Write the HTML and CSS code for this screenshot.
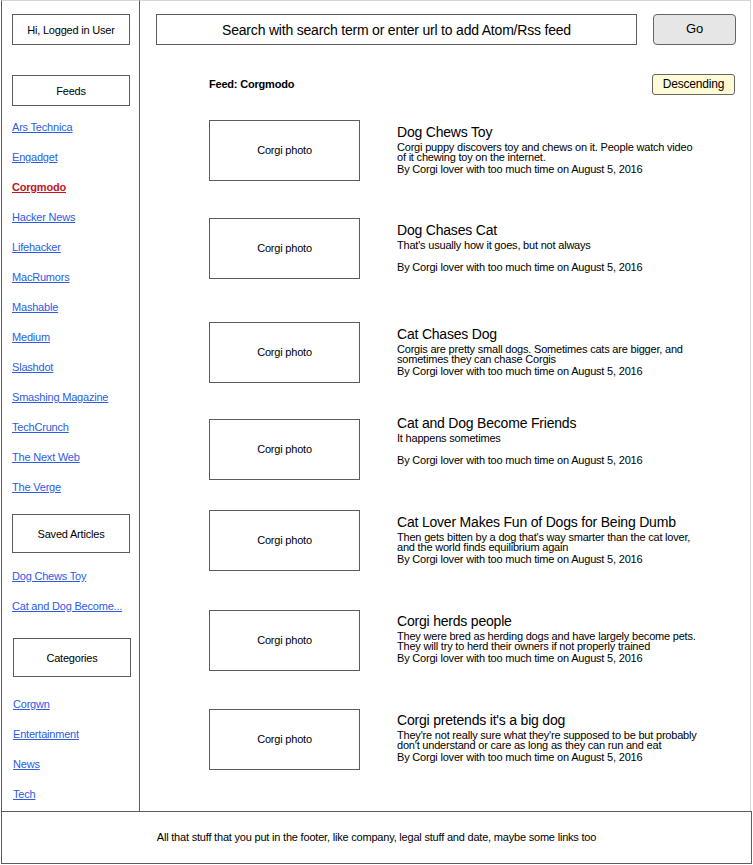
FILE: index.html
```html
<!DOCTYPE html>
<html lang="en">
<head>
<meta charset="utf-8">
<title>Feed Reader</title>
<link rel="stylesheet" href="styles.css">
</head>
<body>
<div class="page">
  <div class="top">
    <aside class="sidebar">
      <div class="box box-user">Hi, Logged in User</div>
      <div class="box box-feeds">Feeds</div>
      <nav class="links links-feeds">
        <a href="#">Ars Technica</a>
        <a href="#">Engadget</a>
        <a href="#" class="active">Corgmodo</a>
        <a href="#">Hacker News</a>
        <a href="#">Lifehacker</a>
        <a href="#">MacRumors</a>
        <a href="#">Mashable</a>
        <a href="#">Medium</a>
        <a href="#">Slashdot</a>
        <a href="#">Smashing Magazine</a>
        <a href="#">TechCrunch</a>
        <a href="#">The Next Web</a>
        <a href="#">The Verge</a>
      </nav>
      <div class="box box-saved">Saved Articles</div>
      <nav class="links links-saved">
        <a href="#">Dog Chews Toy</a>
        <a href="#">Cat and Dog Become...</a>
      </nav>
      <div class="box box-cats">Categories</div>
      <nav class="links links-cats">
        <a href="#">Corgwn</a>
        <a href="#">Entertainment</a>
        <a href="#">News</a>
        <a href="#">Tech</a>
      </nav>
    </aside>
    <main class="main">
      <div class="search-row">
        <div class="search">Search with search term or enter url to add Atom/Rss feed</div>
        <button class="go">Go</button>
      </div>
      <div class="feed-row">
        <span class="feed-name">Feed: Corgmodo</span>
        <button class="sort">Descending</button>
      </div>
      <div class="articles">
        <article class="article">
          <div class="photo">Corgi photo</div>
          <div class="text">
            <h2 class="title">Dog Chews Toy</h2>
            <p class="desc">Corgi puppy discovers toy and chews on it. People watch video<br>of it chewing toy on the internet.</p>
            <p class="by">By Corgi lover with too much time on August 5, 2016</p>
          </div>
        </article>
        <article class="article">
          <div class="photo">Corgi photo</div>
          <div class="text">
            <h2 class="title">Dog Chases Cat</h2>
            <p class="desc">That's usually how it goes, but not always</p>
            <p class="by">By Corgi lover with too much time on August 5, 2016</p>
          </div>
        </article>
        <article class="article">
          <div class="photo">Corgi photo</div>
          <div class="text">
            <h2 class="title">Cat Chases Dog</h2>
            <p class="desc">Corgis are pretty small dogs. Sometimes cats are bigger, and<br>sometimes they can chase Corgis</p>
            <p class="by">By Corgi lover with too much time on August 5, 2016</p>
          </div>
        </article>
        <article class="article">
          <div class="photo">Corgi photo</div>
          <div class="text">
            <h2 class="title">Cat and Dog Become Friends</h2>
            <p class="desc">It happens sometimes</p>
            <p class="by">By Corgi lover with too much time on August 5, 2016</p>
          </div>
        </article>
        <article class="article">
          <div class="photo">Corgi photo</div>
          <div class="text">
            <h2 class="title">Cat Lover Makes Fun of Dogs for Being Dumb</h2>
            <p class="desc">Then gets bitten by a dog that's way smarter than the cat lover,<br>and the world finds equilibrium again</p>
            <p class="by">By Corgi lover with too much time on August 5, 2016</p>
          </div>
        </article>
        <article class="article">
          <div class="photo">Corgi photo</div>
          <div class="text">
            <h2 class="title">Corgi herds people</h2>
            <p class="desc">They were bred as herding dogs and have largely become pets.<br>They will try to herd their owners if not properly trained</p>
            <p class="by">By Corgi lover with too much time on August 5, 2016</p>
          </div>
        </article>
        <article class="article">
          <div class="photo">Corgi photo</div>
          <div class="text">
            <h2 class="title">Corgi pretends it's a big dog</h2>
            <p class="desc">They're not really sure what they're supposed to be but probably<br>don't understand or care as long as they can run and eat</p>
            <p class="by">By Corgi lover with too much time on August 5, 2016</p>
          </div>
        </article>
      </div>
    </main>
  </div>
  <footer class="footer">All that stuff that you put in the footer, like company, legal stuff and date, maybe some links too</footer>
</div>
</body>
</html>
```

FILE: styles.css
```css
* { box-sizing: border-box; }

body {
  margin: 0;
  background: #fff;
  color: #000;
  font-family: "Liberation Sans", Arial, Helvetica, sans-serif;
  font-size: 11px;
  letter-spacing: -0.2px;
}

.page {
  width: 753px;
  padding-left: 1px;
}

.top {
  display: flex;
  height: 811px;
}

/* Sidebar */
.sidebar {
  width: 139px;
  flex: none;
  border-left: 1px solid #5c5c5c;
  border-right: 1px solid #5c5c5c;
  border-top: 1px solid #d6d6d6;
  padding: 13px 0 0 10px;
  display: flex;
  flex-direction: column;
  align-items: flex-start;
}

.box {
  width: 118px;
  border: 1px solid #5c5c5c;
  display: flex;
  align-items: center;
  justify-content: center;
  font-size: 11px;
  flex: none;
}

.box-user { height: 31px; }
.box-feeds { height: 31px; margin-top: 30px; }
.box-saved { height: 39px; margin-top: 12px; }
.box-cats { height: 39px; margin-top: 17px; margin-left: 1px; }

.links {
  display: flex;
  flex-direction: column;
}
.links-feeds { margin-top: 6px; }
.links-saved { margin-top: 8px; }
.links-cats { margin-top: 12px; margin-left: 1px; }

.links a {
  display: block;
  height: 30px;
  line-height: 30px;
  color: #2b5ce6;
  text-decoration: underline;
  font-size: 11px;
}

.links a.active {
  color: #c0161e;
  font-weight: bold;
}

/* Main */
.main {
  width: 611px;
  flex: none;
  border-top: 1px solid #d6d6d6;
  border-right: 1px solid #d6d6d6;
  padding: 13px 0 0 16px;
}

.search-row {
  display: flex;
  gap: 16px;
}

.search {
  width: 481px;
  height: 31px;
  border: 1px solid #5c5c5c;
  display: flex;
  align-items: center;
  justify-content: center;
  font-size: 14px;
}

.go {
  width: 83px;
  height: 31px;
  border: 1px solid #666;
  border-radius: 4px;
  background: #e6e6e6;
  font-family: inherit;
  font-size: 13px;
  letter-spacing: -0.2px;
  color: #000;
  padding: 0 0 3px;
}

.feed-row {
  margin-top: 29px;
  padding-left: 53px;
  width: 579px;
  height: 21px;
  display: flex;
  align-items: center;
  justify-content: space-between;
}

.feed-name {
  font-weight: bold;
  font-size: 11px;
  margin-top: -1px;
}

.sort {
  width: 83px;
  height: 21px;
  border: 1px solid #666;
  border-radius: 3px;
  background: #fffad6;
  font-family: inherit;
  font-size: 12px;
  letter-spacing: -0.2px;
  color: #000;
  padding: 0 0 2px;
}

.articles {
  margin-top: 25px;
  padding-left: 53px;
}

.article {
  display: flex;
  align-items: flex-start;
}

.article:nth-child(2) { margin-top: 37px; }
.article:nth-child(3) { margin-top: 43px; }
.article:nth-child(4) { margin-top: 36px; }
.article:nth-child(5) { margin-top: 30px; }
.article:nth-child(6) { margin-top: 39px; }
.article:nth-child(7) { margin-top: 38px; }

.photo {
  width: 151px;
  height: 61px;
  flex: none;
  border: 1px solid #5c5c5c;
  display: flex;
  align-items: center;
  justify-content: center;
  font-size: 11px;
  padding-bottom: 2px;
}

.text {
  margin-left: 37px;
  margin-top: 4px;
  white-space: nowrap;
}

.article:nth-child(4) .text { margin-top: -4px; }
.article:nth-child(6) .text,
.article:nth-child(7) .text { margin-top: 3px; }

.title {
  margin: 0;
  font-size: 14px;
  font-weight: normal;
  line-height: 16px;
}

.desc {
  margin: 2px 0 0;
  font-size: 11px;
  line-height: 10px;
  min-height: 20px;
}

.by {
  margin: 2px 0 0;
  font-size: 11px;
  line-height: 10px;
}

/* Footer */
.footer {
  width: 751px;
  height: 53px;
  border: 1px solid #5c5c5c;
  display: flex;
  align-items: center;
  justify-content: center;
  font-size: 11px;
  padding-bottom: 2px;
}
```
